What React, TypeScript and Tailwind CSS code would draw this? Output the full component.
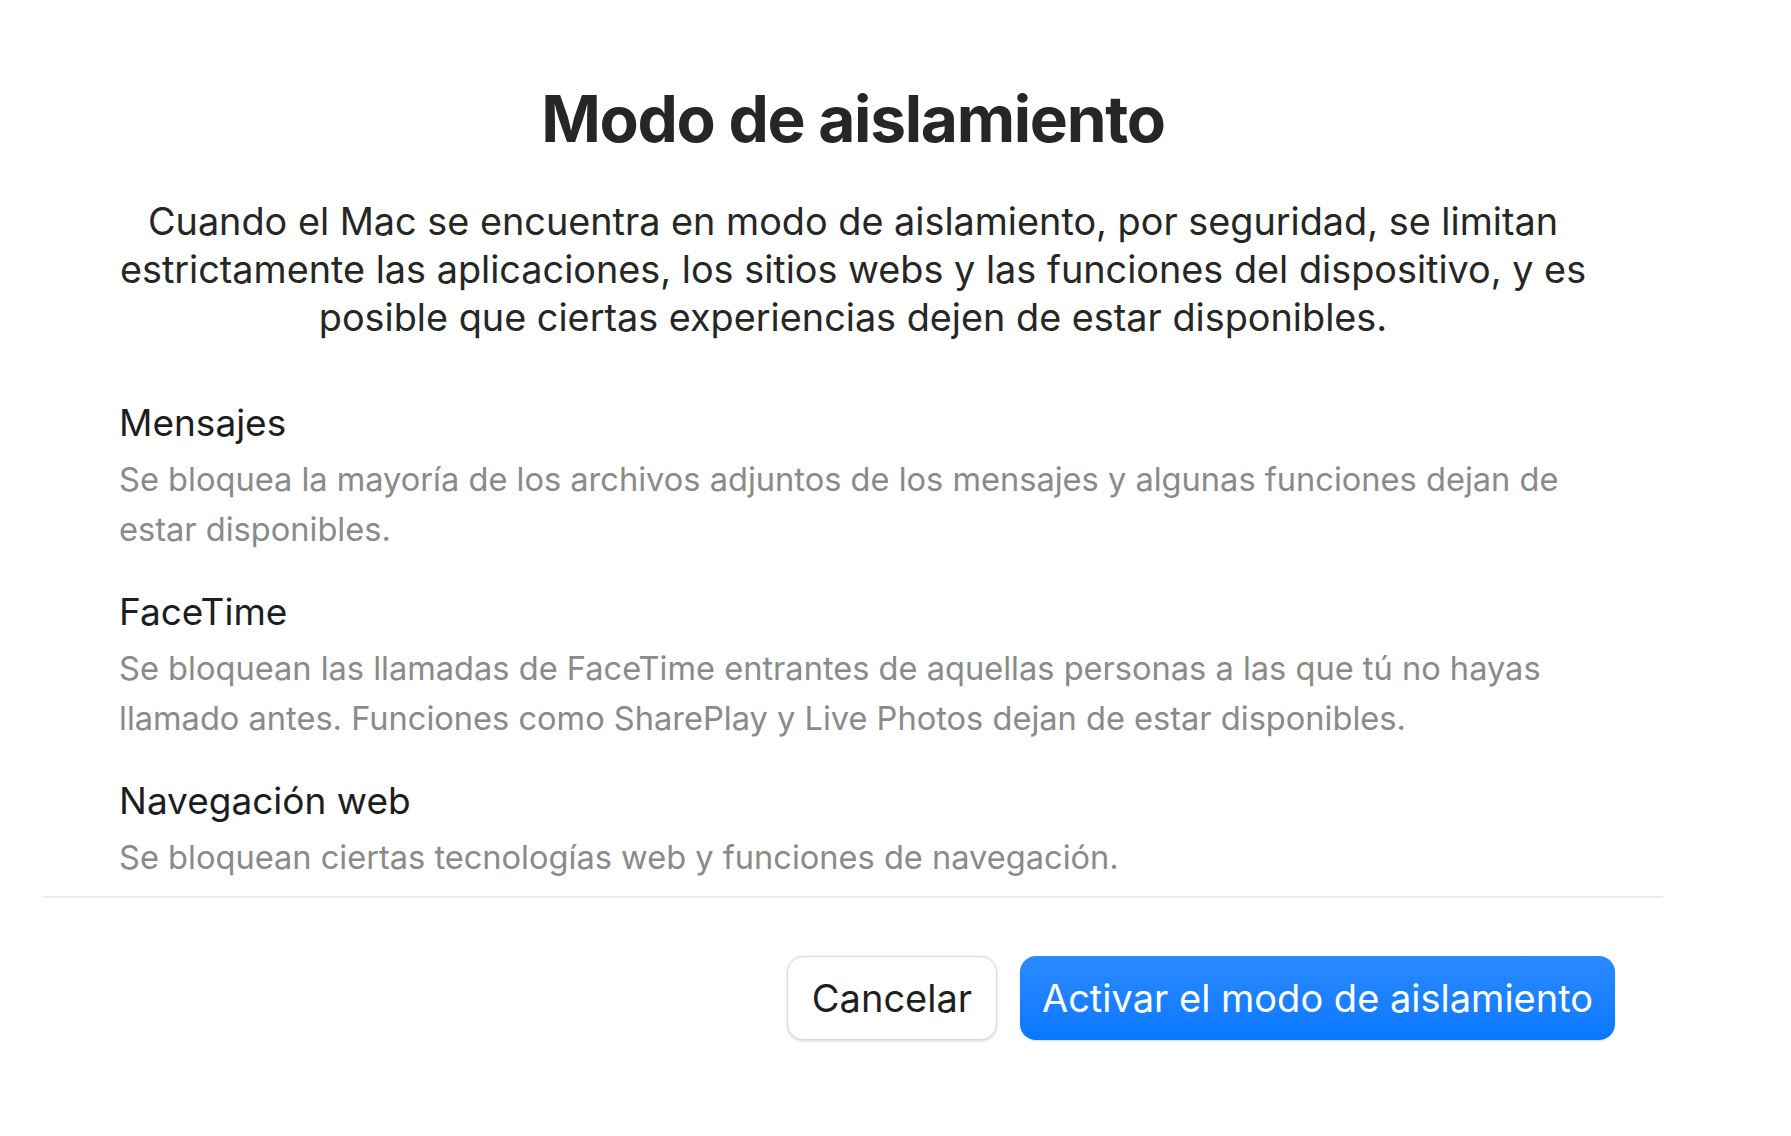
import React, { JSX } from "react";

const sections = [
  {
    title: "Mensajes",
    lines: [
      "Se bloquea la mayoría de los archivos adjuntos de los mensajes y algunas funciones dejan de",
      "estar disponibles.",
    ],
  },
  {
    title: "FaceTime",
    lines: [
      "Se bloquean las llamadas de FaceTime entrantes de aquellas personas a las que tú no hayas",
      "llamado antes. Funciones como SharePlay y Live Photos dejan de estar disponibles.",
    ],
  },
  {
    title: "Navegación web",
    lines: ["Se bloquean ciertas tecnologías web y funciones de navegación."],
  },
];

export default function App(): JSX.Element {
  return (
    <div className="min-h-screen w-full bg-white font-['Inter',sans-serif] antialiased">
      <div className="ml-[43px] w-[1620px] flex flex-col">
        <h1 className="pt-[80px] text-center text-[64px] leading-[78px] font-bold tracking-[-0.02em] text-[#262626]">
          Modo de aislamiento
        </h1>

        <p className="mt-[39px] text-center text-[37.8px] leading-[48px] text-[#262626] whitespace-nowrap">
          Cuando el Mac se encuentra en modo de aislamiento, por seguridad, se limitan
          <br />
          estrictamente las aplicaciones, los sitios webs y las funciones del dispositivo, y es
          <br />
          posible que ciertas experiencias dejen de estar disponibles.
        </p>

        <div className="mt-[60px] pl-[76px] flex flex-col gap-[36px]">
          {sections.map((s) => (
            <div key={s.title} className="flex flex-col gap-[9px]">
              <h2 className="text-[37px] leading-[44px] text-[#1d1d1f]">{s.title}</h2>
              <p className="text-[32.6px] leading-[50px] text-[#8a8a8a] whitespace-nowrap">
                {s.lines.map((l, i) => (
                  <React.Fragment key={i}>
                    {i > 0 && <br />}
                    {l}
                  </React.Fragment>
                ))}
              </p>
            </div>
          ))}
        </div>

        <div className="mt-[14px] h-[2px] bg-[#ececec]" />

        <div className="mt-[58px] pr-[48px] flex justify-end gap-[23px]">
          <button className="w-[210px] h-[84px] rounded-[16px] bg-white border border-[#d9d9d9] shadow-[0_1px_3px_rgba(0,0,0,0.18)] text-[38px] text-[#1f1f1f]">
            Cancelar
          </button>
          <button className="w-[595px] h-[84px] rounded-[16px] bg-gradient-to-b from-[#2a8bff] to-[#0877ff] shadow-[0_1px_2px_rgba(0,0,0,0.15)] text-[38px] text-white">
            Activar el modo de aislamiento
          </button>
        </div>
      </div>
    </div>
  );
}
